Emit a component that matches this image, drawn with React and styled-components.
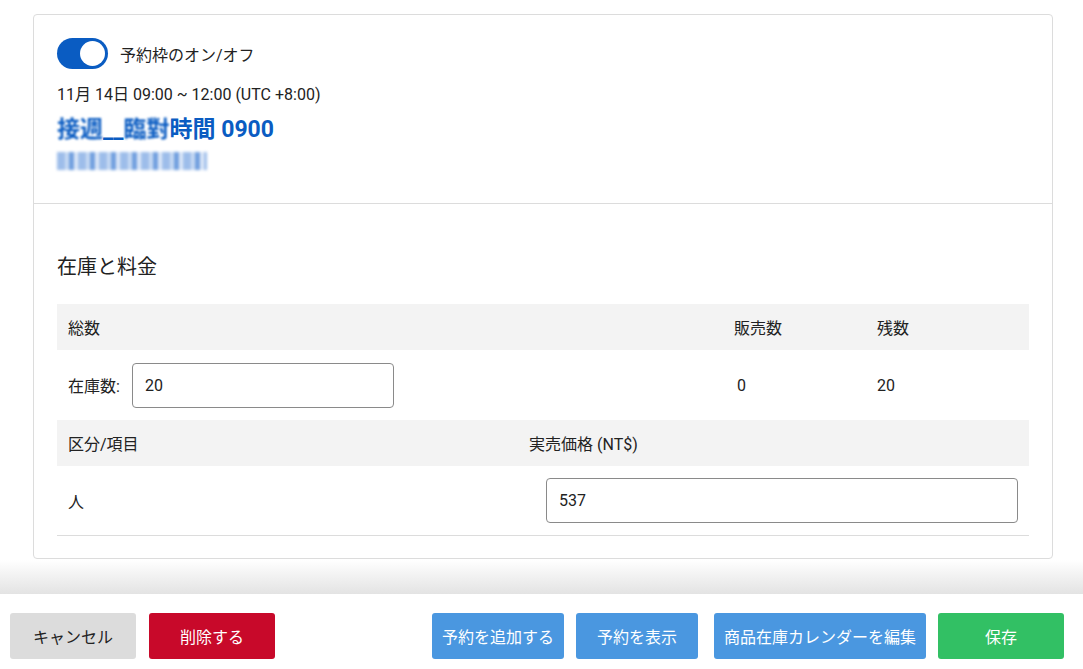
import React from 'react'
import styled, { createGlobalStyle } from 'styled-components'

const GlobalStyle = createGlobalStyle`
  html, body {
    margin: 0;
    padding: 0;
    background: #ffffff;
    font-family: Roboto, "Noto Sans CJK JP", sans-serif;
    color: #222222;
  }
  * { box-sizing: border-box; }
`

const Page = styled.div`
  display: flex;
  flex-direction: column;
  height: 100vh;
  overflow: hidden;
`

const Scroll = styled.div`
  flex: 1;
  min-height: 0;
  overflow: hidden;
  padding: 14px 30px 0 33px;
`

const Card = styled.div`
  border: 1px solid #dcdcdc;
  border-radius: 4px;
  background: #fff;
`

const Header = styled.div`
  padding: 23px 23px 0;
  height: 189px;
  border-bottom: 1px solid #dcdcdc;
`

const ToggleRow = styled.label`
  display: flex;
  align-items: center;
  gap: 12px;
  font-size: 16px;
`

const Track = styled.span`
  width: 51px;
  height: 31px;
  border-radius: 16px;
  background: ${p => (p.on ? '#0a5cc2' : '#c8c8c8')};
  display: flex;
  align-items: center;
  justify-content: ${p => (p.on ? 'flex-end' : 'flex-start')};
  padding: 0 3px;
`

const Thumb = styled.span`
  width: 25px;
  height: 25px;
  border-radius: 50%;
  background: #fff;
`

const DateLine = styled.div`
  margin-top: 16px;
  font-size: 16px;
  line-height: 20px;
`

const Title = styled.div`
  margin-top: 10px;
  font-size: 23px;
  line-height: 30px;
  font-weight: 700;
  color: #0a5cc2;
  span { filter: blur(1.2px); }
`

const Blurred = styled.div`
  margin-top: 7px;
  height: 18px;
  width: 150px;
  filter: blur(1.5px);
  background:
    repeating-linear-gradient(90deg, #9dbdea 0 8px, #c9dbf3 8px 12px, #6f9ede 12px 17px, #dfe9f8 17px 21px);
`

const Body = styled.div`
  padding: 0 23px 22px;
`

const SectionTitle = styled.h2`
  margin: 0;
  padding: 48px 0 22px;
  font-size: 20px;
  line-height: 30px;
  font-weight: 400;
`

const Table = styled.div`
  display: grid;
  grid-template-columns: ${p => p.cols};
  font-size: 16px;
`

const Head = styled.div`
  background: #f3f3f3;
  height: 46px;
  display: flex;
  align-items: center;
  padding-left: 11px;
`

const Cell = styled.div`
  height: 70px;
  display: flex;
  align-items: center;
  gap: 12px;
  padding-left: ${p => p.pl || 11}px;
  padding-right: ${p => p.pr || 0}px;
  border-bottom: ${p => (p.line ? '1px solid #dcdcdc' : 'none')};
`

const Input = styled.input`
  height: 45px;
  width: ${p => p.w || '100%'};
  flex: ${p => (p.w ? 'none' : 1)};
  border: 1px solid #8a8a8a;
  border-radius: 4px;
  padding: 0 12px;
  font: inherit;
  font-size: 16px;
  color: #222;
  outline: none;
`

const Shade = styled.div`
  flex: none;
  height: 34px;
  background: linear-gradient(#ffffff, #e3e3e3);
`

const Footer = styled.div`
  flex: none;
  height: 75px;
  display: flex;
  align-items: flex-start;
  padding: 19px 19px 0 10px;
  gap: 12px;
  background: #fff;
`

const Spacer = styled.div`
  flex: 1;
`

const colors = {
  gray: ['#dcdcdc', '#222'],
  red: ['#c8092a', '#fff'],
  blue: ['#4a97e0', '#fff'],
  green: ['#32c064', '#fff'],
}

const Button = styled.button`
  height: 46px;
  min-width: ${p => p.w}px;
  padding: 0 10px;
  border: none;
  border-radius: 3px;
  background: ${p => colors[p.kind][0]};
  color: ${p => colors[p.kind][1]};
  font-family: Roboto, "Noto Sans CJK JP", sans-serif;
  font-size: 16px;
  margin-left: ${p => p.ml || 0}px;
`

export default function App() {
  return (
    <Page>
      <GlobalStyle />
      <Scroll>
        <Card>
          <Header>
            <ToggleRow>
              <Track on>
                <Thumb />
              </Track>
              予約枠のオン/オフ
            </ToggleRow>
            <DateLine>11月 14日 09:00 ~ 12:00 (UTC +8:00)</DateLine>
            <Title><span>接週</span>__<span>臨對</span>時間 0900</Title>
            <Blurred />
          </Header>
          <Body>
            <SectionTitle>在庫と料金</SectionTitle>
            <Table cols="1fr 143px 163px">
              <Head>総数</Head>
              <Head>販売数</Head>
              <Head>残数</Head>
              <Cell>
                在庫数:
                <Input w="262px" defaultValue="20" />
              </Cell>
              <Cell pl={14}>0</Cell>
              <Cell>20</Cell>
            </Table>
            <Table cols="461px 1fr">
              <Head>区分/項目</Head>
              <Head>実売価格 (NT$)</Head>
              <Cell line>人</Cell>
              <Cell line pl={28} pr={11}>
                <Input defaultValue="537" />
              </Cell>
            </Table>
          </Body>
        </Card>
      </Scroll>
      <Shade />
      <Footer>
        <Button kind="gray" w={126}>キャンセル</Button>
        <Button kind="red" w={126} ml={1}>削除する</Button>
        <Spacer />
        <Button kind="blue" w={131}>予約を追加する</Button>
        <Button kind="blue" w={122}>予約を表示</Button>
        <Button kind="blue" w={212} ml={4}>商品在庫カレンダーを編集</Button>
        <Button kind="green" w={126}>保存</Button>
      </Footer>
    </Page>
  )
}
